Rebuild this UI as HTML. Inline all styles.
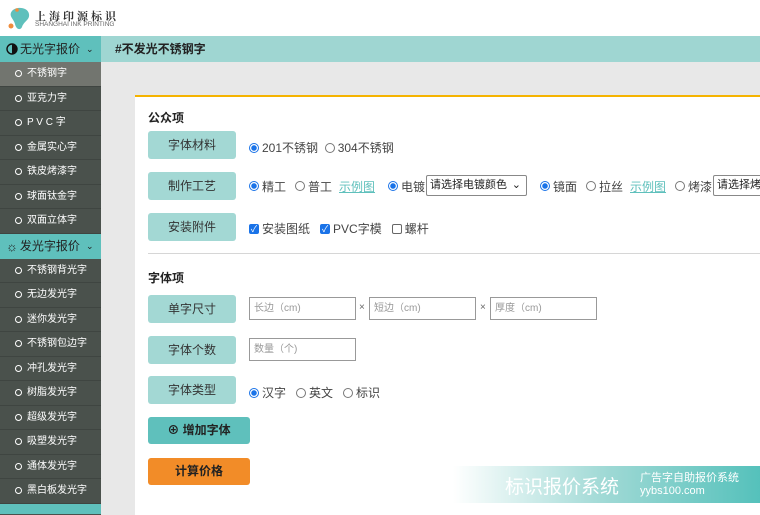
<!DOCTYPE html>
<html><head><meta charset="utf-8"><style>
*{margin:0;padding:0;box-sizing:border-box}
body{width:760px;height:515px;overflow:hidden;font-family:"Liberation Sans","Noto Sans CJK SC",sans-serif;font-size:12px;color:#333;background:#e8e8e8;position:relative}
.top{position:absolute;left:0;top:0;width:760px;height:36px;background:#fff}
.bar{position:absolute;left:0;top:36px;width:760px;height:26px;background:#9fd6d2}
.bar .l{position:absolute;left:0;top:0;width:101px;height:26px;background:#5fc0bc;color:#222;font-size:12px;line-height:26px;padding-left:6px;display:flex;align-items:center}
.bar .t{position:absolute;left:115px;top:0;line-height:26px;font-weight:bold;font-size:12px;color:#222}
.side{position:absolute;left:0;top:62px;width:101px;height:453px;background:#4a514c}
.it{height:24.5px;line-height:24px;color:#fff;font-size:10px;padding-left:15px;border-bottom:1px solid #3f4541}
.it:before{content:"";display:inline-block;width:5px;height:5px;border:1.5px solid #fff;border-radius:50%;margin-right:5px;vertical-align:-1px}
.it.a{background:#72756f}
.grp{height:25px;line-height:25px;background:#5fc0bc;color:#222;font-size:12px;padding-left:6px;display:flex;align-items:center}
.card{position:absolute;left:135px;top:95px;width:625px;height:420px;background:#fff;border-top:2px solid #f5b300}
.h{position:absolute;left:13px;font-weight:bold;font-size:12px;color:#222}
.lb{position:absolute;left:13px;width:88px;height:28px;background:#a3d8d4;border-radius:3px;text-align:center;line-height:28px;font-size:12px;color:#333}
.row{position:absolute;left:114px;font-size:12px;color:#444;white-space:nowrap;display:flex;align-items:center}
.p{position:absolute;font-size:12px;color:#444;white-space:nowrap;display:flex;align-items:center;height:20px}
.r{display:inline-block;width:10px;height:10px;border:1px solid #777;border-radius:50%;margin:0 3px 0 0;vertical-align:middle}
.r.on{border:1px solid #1a73e8;background:radial-gradient(circle,#1a73e8 2.5px,#fff 3px)}
.c{display:inline-block;width:10px;height:10px;border:1px solid #666;border-radius:2px;margin-right:3px}
.c.on{background:#1a73e8;border-color:#1a73e8;color:#fff;font-size:9px;line-height:9px;text-align:center}
.lk{color:#5fc0bc;text-decoration:underline}
.sel{position:absolute;height:21px;border:1px solid #888;border-radius:2px;font-size:11px;line-height:19px;padding-left:3px;color:#222;background:#fff;white-space:nowrap;overflow:hidden}
.in{position:absolute;height:23px;border:1px solid #999;font-size:10px;color:#999;line-height:21px;padding-left:4px}
.btn{position:absolute;left:13px;width:102px;height:27px;border-radius:3px;text-align:center;line-height:27px;font-weight:bold;font-size:12px;color:#222}
</style></head><body>
<div class="top">
<svg style="position:absolute;left:6px;top:5px" width="26" height="26" viewBox="0 0 26 26"><path d="M6 6 C10 1 22 2 23 9 C24 15 18 16 16 22 C14 26 10 24 9 19 C8 14 2 11 6 6Z" fill="#5fc0bc"/><circle cx="5" cy="21" r="2.5" fill="#f08c3c"/><circle cx="11" cy="5" r="1.8" fill="#f08c3c"/></svg>
<div style="position:absolute;left:35px;top:8px;font-size:11px;font-weight:bold;color:#333;letter-spacing:3px;font-family:'Noto Serif CJK SC',serif">上海印源标识</div>
<div style="position:absolute;left:35px;top:21px;font-size:6.5px;color:#666">SHANGHAI INK PRINTING</div>
</div>
<div class="bar"><div class="l"><svg width="12" height="12" viewBox="0 0 12 12" style="margin-right:2px"><circle cx="6" cy="6" r="5" fill="none" stroke="#111" stroke-width="1.4"/><path d="M6 1 A5 5 0 0 1 6 11Z" fill="#111"/></svg>无光字报价 <span style="font-size:9px;margin-left:6px">⌄</span></div><div class="t">#不发光不锈钢字</div></div>
<div class="side">
<div class="it a">不锈钢字</div><div class="it">亚克力字</div><div class="it">P V C 字</div><div class="it">金属实心字</div><div class="it">铁皮烤漆字</div><div class="it">球面钛金字</div><div class="it">双面立体字</div>
<div class="grp"><span style="font-size:13px;margin-right:2px">☼</span>发光字报价 <span style="font-size:9px;margin-left:6px">⌄</span></div>
<div class="it">不锈钢背光字</div><div class="it">无边发光字</div><div class="it">迷你发光字</div><div class="it">不锈钢包边字</div><div class="it">冲孔发光字</div><div class="it">树脂发光字</div><div class="it">超级发光字</div><div class="it">吸塑发光字</div><div class="it">通体发光字</div><div class="it">黑白板发光字</div>
<div class="grp" style="height:10px"></div>
</div>
<div class="card">
<div class="h" style="top:12px">公众项</div>
<div class="lb" style="top:34px">字体材料</div>
<div class="row" style="top:42px"><span class="r on"></span>201不锈钢&nbsp;&nbsp;<span class="r"></span>304不锈钢</div>
<div class="lb" style="top:75px">制作工艺</div>
<div class="p" style="left:114px;top:79px"><span class="r on"></span>精工</div>
<div class="p" style="left:160px;top:79px"><span class="r"></span>普工</div>
<div class="p" style="left:204px;top:79px"><span class="lk">示例图</span></div>
<div class="p" style="left:253px;top:79px"><span class="r on"></span>电镀</div>
<div class="sel" style="left:291px;top:78px;width:101px">请选择电镀颜色 <span style="position:absolute;right:5px">⌄</span></div>
<div class="p" style="left:405px;top:79px"><span class="r on"></span>镜面</div>
<div class="p" style="left:451px;top:79px"><span class="r"></span>拉丝</div>
<div class="p" style="left:495px;top:79px"><span class="lk">示例图</span></div>
<div class="p" style="left:540px;top:79px"><span class="r"></span>烤漆</div>
<div class="sel" style="left:578px;top:78px;width:60px">请选择烤漆</div>
<div class="lb" style="top:116px">安装附件</div>
<div class="row" style="top:123px"><span class="c on">✓</span>安装图纸&nbsp;&nbsp;&nbsp;<span class="c on">✓</span>PVC字模&nbsp;&nbsp;&nbsp;<span class="c"></span>螺杆</div>
<div style="position:absolute;left:13px;top:156px;width:612px;height:1px;background:#d6d6d6"></div>
<div class="h" style="top:172px">字体项</div>
<div class="lb" style="top:198px">单字尺寸</div>
<div class="in" style="left:114px;top:200px;width:107px">长边（cm)</div>
<div style="position:absolute;left:224px;top:205px;font-size:10px;color:#666">×</div>
<div class="in" style="left:234px;top:200px;width:107px">短边（cm)</div>
<div style="position:absolute;left:345px;top:205px;font-size:10px;color:#666">×</div>
<div class="in" style="left:355px;top:200px;width:107px">厚度（cm)</div>
<div class="lb" style="top:239px">字体个数</div>
<div class="in" style="left:114px;top:241px;width:107px">数量（个)</div>
<div class="lb" style="top:279px">字体类型</div>
<div class="row" style="top:287px"><span class="r on"></span>汉字&nbsp;&nbsp;&nbsp;<span class="r"></span>英文&nbsp;&nbsp;&nbsp;<span class="r"></span>标识</div>
<div class="btn" style="top:320px;background:#5fc0bc">⊕ 增加字体</div>
<div class="btn" style="top:361px;background:#f28c28">计算价格</div>
</div>
<div style="position:absolute;left:453px;top:466px;width:307px;height:37px;background:linear-gradient(90deg,rgba(255,255,255,0.9),#9fd9d5 50%,#55c1bb)"></div>
<div style="position:absolute;left:505px;top:472px;font-size:19px;color:#fff">标识报价系统</div>
<div style="position:absolute;left:640px;top:472px;font-size:11px;color:#fff;line-height:13px">广告字自助报价系统<br>yybs100.com</div>
</body></html>
